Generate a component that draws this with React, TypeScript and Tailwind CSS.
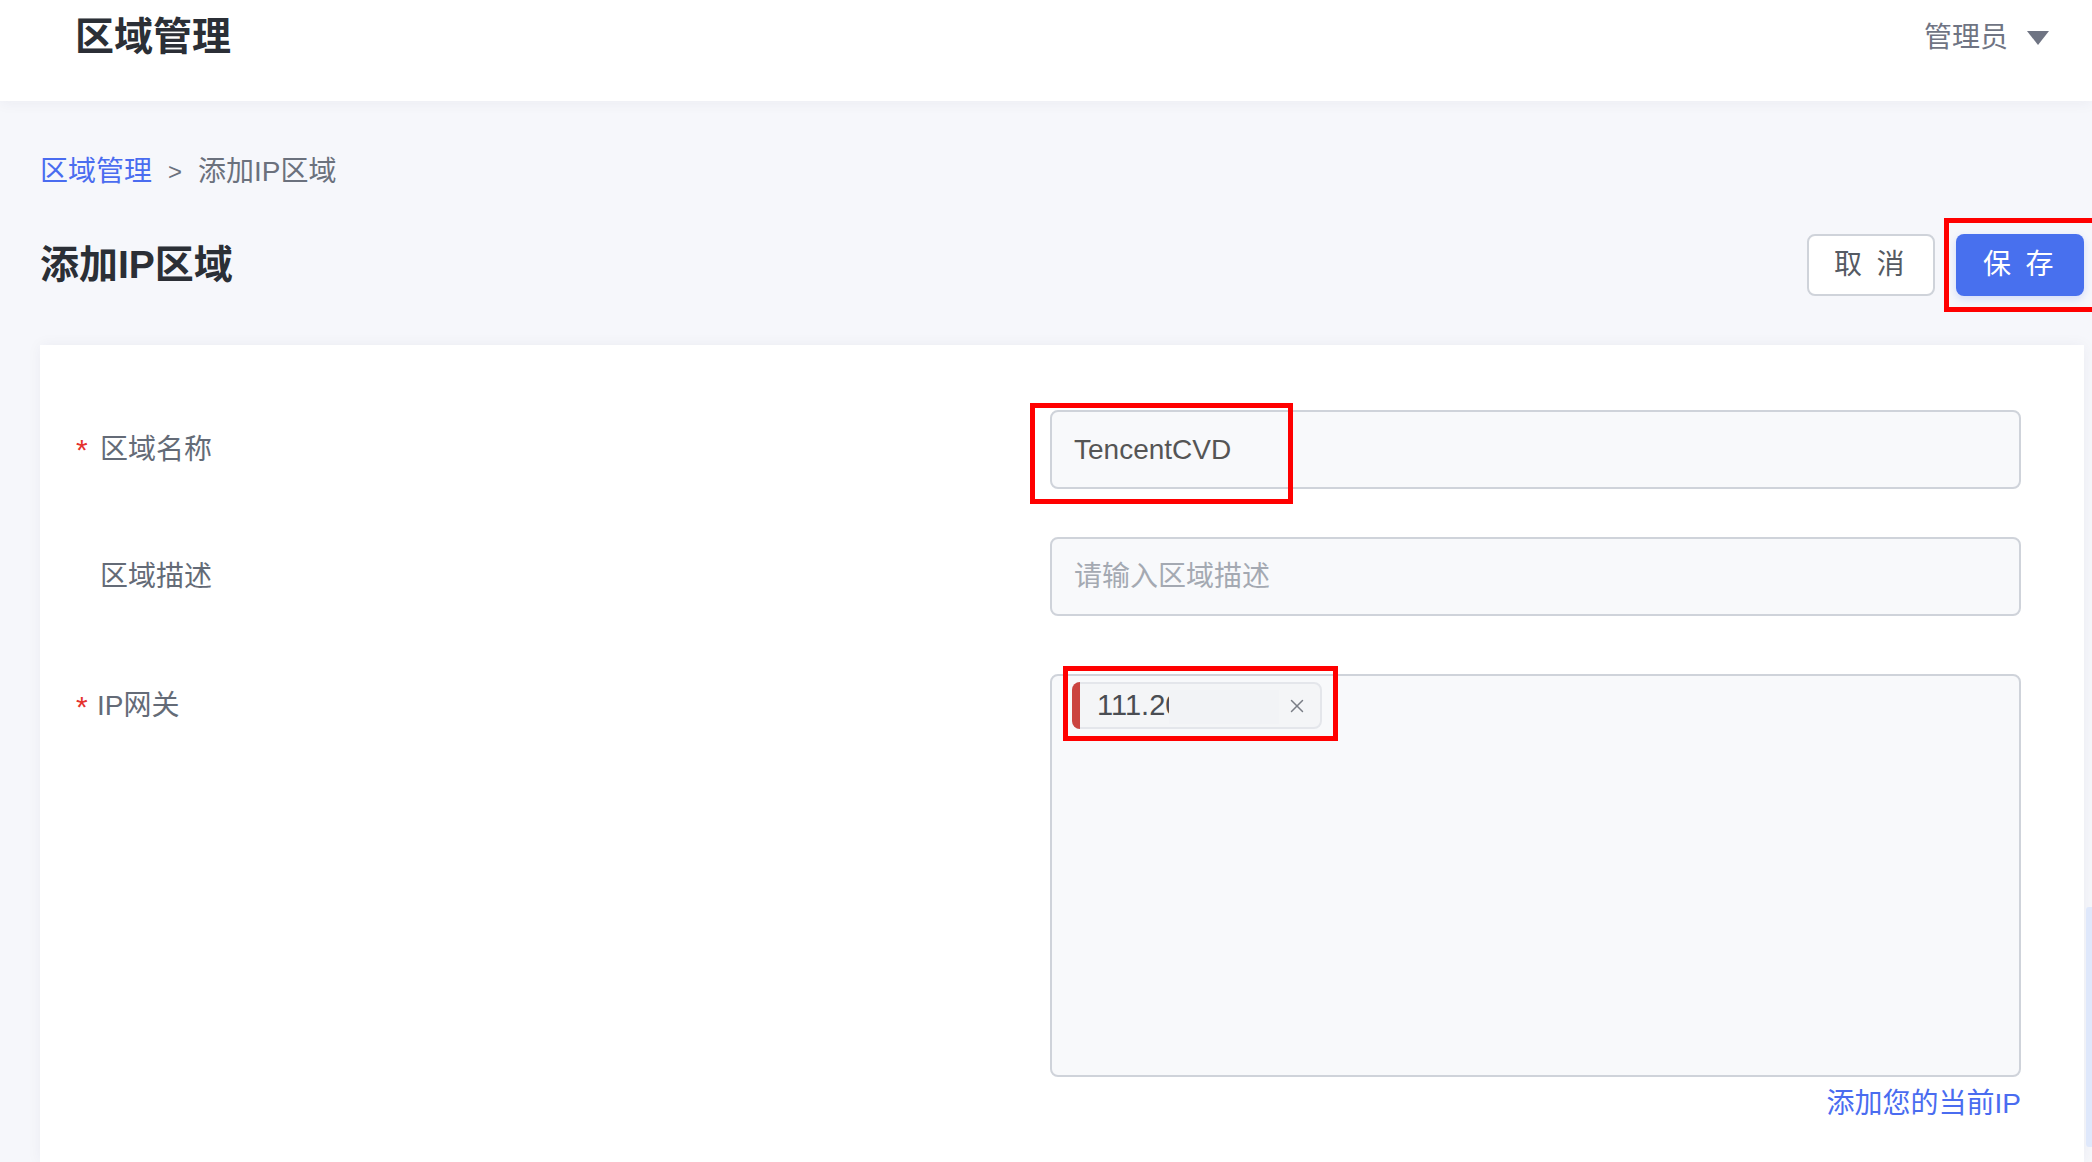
import { X } from "lucide-react";

const font = { fontFamily: '"Liberation Sans", "Noto Sans CJK SC", sans-serif' };

function RedBox({ className }: { className: string }) {
  return <div className={`pointer-events-none absolute border-[5px] border-[#ff0000] ${className}`} />;
}

function Label({ text, required }: { text: string; required?: boolean }) {
  return (
    <div className="flex h-[79px] items-center text-[28px] text-[#646b77]">
      <span className="w-[24px] text-[30px] text-[#e5322d]">{required ? "*" : ""}</span>
      <span>{text}</span>
    </div>
  );
}

export default function App() {
  return (
    <div className="relative flex h-[1162px] w-full flex-col overflow-hidden bg-[#f6f7fb]" style={font}>
      <header className="relative z-10 flex h-[101px] shrink-0 items-center justify-between bg-white pb-[26px] pl-[75px] pr-[42px] shadow-[0_2px_14px_rgba(30,40,80,0.05)]">
        <h1 className="text-[39px] font-bold text-[#2b2f36]">区域管理</h1>
        <div className="flex items-center gap-[18px] text-[28px] text-[#6f7483]">
          <span>管理员</span>
          <svg width="24" height="16" viewBox="0 0 24 16">
            <path d="M1 1h22L12 15z" fill="#6f7483" />
          </svg>
        </div>
      </header>

      <main className="flex flex-1 flex-col pl-[40px] pr-[8px] pt-[51px]">
        <nav className="flex h-[40px] items-center text-[28px]">
          <span className="text-[#4a6cf0]">区域管理</span>
          <span className="mx-[16px] text-[24px] text-[#6b717d]">&gt;</span>
          <span className="text-[#6b717d]">添加IP区域</span>
        </nav>

        <div className="mt-[42px] flex h-[62px] items-center justify-between">
          <h2 className="text-[39px] font-bold text-[#2b2f36]">添加IP区域</h2>
          <div className="flex items-center gap-[21px]">
            <button className="h-[62px] w-[128px] rounded-[8px] border-2 border-[#cfd3da] bg-white text-[28px] tracking-[0.12em] text-[#555a63]">
              取 消
            </button>
            <div className="relative">
              <button className="h-[62px] w-[128px] rounded-[8px] bg-[#4870ee] text-[28px] tracking-[0.12em] text-white shadow-[0_3px_8px_rgba(72,112,238,0.2)]">
                保 存
              </button>
              <RedBox className="-left-[12px] -top-[16px] -bottom-[16px] -right-[14px]" />
            </div>
          </div>
        </div>

        <section className="mt-[49px] flex-1 bg-white pl-[36px] pr-[63px] pt-[65px] shadow-[0_0_14px_rgba(30,40,80,0.05)]">
          <div className="grid grid-cols-[974px_1fr]">
            <Label text="区域名称" required />
            <div className="relative">
              <div className="flex h-[79px] items-center rounded-[8px] border-2 border-[#cfd3da] bg-[#f8f9fb] px-[22px] text-[28px] text-[#555]">
                TencentCVD
              </div>
              <RedBox className="-left-[20px] -top-[7px] h-[101px] w-[263px]" />
            </div>

            <div className="mt-[48px]">
              <Label text="区域描述" />
            </div>
            <div className="mt-[48px] flex h-[79px] items-center rounded-[8px] border-2 border-[#cfd3da] bg-[#f8f9fb] px-[22px] text-[28px] text-[#a4a9b2]">
              请输入区域描述
            </div>

            <div className="mt-[59px]">
              <div className="flex h-[62px] items-center text-[28px] text-[#646b77]">
                <span className="w-[21px] text-[30px] text-[#e5322d]">*</span>
                <span>IP网关</span>
              </div>
            </div>
            <div className="mt-[58px]">
              <div className="h-[403px] rounded-[8px] border-2 border-[#cfd3da] bg-[#f8f9fb] pl-[20px] pt-[6px]">
                <div className="relative inline-flex h-[47px] w-[250px] items-center overflow-visible rounded-[8px] border-2 border-[#e4e6eb] bg-[#f4f5f7] pl-[23px] pr-[12px] text-[29px] text-[#4a4d53]">
                  <span className="absolute -left-[2px] -top-[2px] h-[47px] w-[8px] rounded-l-[8px] bg-[#cb4440]" />
                  <span>111.20</span>
                  <span className="absolute left-[95px] top-[6px] h-[34px] w-[110px] bg-[#f2f3f6]" />
                  <X className="ml-auto text-[#7a7e86]" size={22} strokeWidth={1.6} />
                  <RedBox className="-left-[11px] -top-[18px] -bottom-[14px] -right-[18px]" />
                </div>
              </div>
              <div className="mt-[6px] text-right text-[28px] text-[#4a6cf0]">添加您的当前IP</div>
            </div>
          </div>
        </section>
      </main>

      <div className="absolute right-0 top-[907px] h-[240px] w-[6px] rounded-l-[3px] bg-[#dfe8fb]" />
    </div>
  );
}
